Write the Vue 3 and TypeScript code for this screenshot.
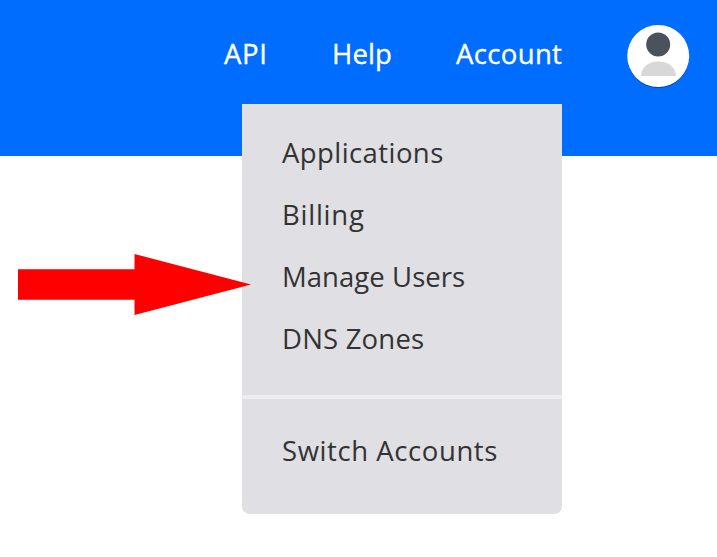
<script setup lang="ts">
interface Item {
  label: string
  key: string
}

const navigation: Item[] = [
  { label: 'API', key: 'api' },
  { label: 'Help', key: 'help' },
  { label: 'Account', key: 'account' },
]

const accountItems: Item[] = [
  { label: 'Applications', key: 'applications' },
  { label: 'Billing', key: 'billing' },
  { label: 'Manage Users', key: 'users' },
  { label: 'DNS Zones', key: 'zones' },
]
</script>

<template>
  <div class="page">
    <header class="header">
      <nav class="navigation">
        <a v-for="item in navigation" :key="item.key" :class="['nav-link', item.key]">{{ item.label }}</a>
      </nav>
      <svg class="avatar" viewBox="0 0 64 66" aria-label="User avatar">
        <circle cx="32.2" cy="33.2" r="30.8" fill="#0044a8" />
        <circle cx="32.2" cy="32" r="31" fill="#fff" />
        <circle cx="32.2" cy="20.5" r="12" fill="#4b525b" />
        <path d="M15 52C15 43.5 22.5 37.5 32.5 37.5S50 43.5 50 52Z" fill="#d8d8d8" />
      </svg>
    </header>
    <section class="menu">
      <div class="menu-group">
        <a v-for="item in accountItems" :key="item.key" :class="['menu-link', item.key]">{{ item.label }}</a>
      </div>
      <div class="menu-footer">
        <a class="menu-link switch">Switch Accounts</a>
      </div>
    </section>
    <svg class="arrow" viewBox="0 0 234 62" aria-hidden="true">
      <path d="M0 15.2H116.5V0L233 30.5L116.5 61V45.8H0Z" fill="#f00" />
    </svg>
  </div>
</template>

<style>
body {
  margin: 0;
  overflow: hidden;
}
</style>

<style scoped>
.page {
  position: relative;
  width: 717px;
  height: 557px;
  overflow: hidden;
  background: #fff;
  font-family: "Open Sans", sans-serif;
  font-size: 27.5px;
}
.header {
  box-sizing: border-box;
  display: flex;
  justify-content: flex-end;
  height: 156px;
  padding: 24px 27px 0 0;
  background: #006dff;
}
.navigation {
  display: flex;
  margin-right: 64px;
  gap: 64px;
  color: #fff;
  font-weight: 500;
  -webkit-text-stroke: 0.35px #fff;
}
.nav-link {
  height: 60px;
  line-height: 60px;
  white-space: nowrap;
}
.api { width: 44px; letter-spacing: 0.7px; }
.help { width: 60px; letter-spacing: 0.1px; }
.account { width: 106px; letter-spacing: 0.35px; }
.avatar {
  width: 64px;
  height: 66px;
}
.menu {
  position: absolute;
  top: 104px;
  left: 242px;
  width: 320px;
  height: 410px;
  border-radius: 0 0 8px 8px;
  background: #e0dfe4;
  color: #333;
}
.menu-group {
  box-sizing: border-box;
  height: 295px;
  padding: 18px 40px 0;
  border-bottom: 4px solid #eeedf1;
}
.menu-footer {
  padding: 21px 40px 0;
}
.menu-link {
  display: block;
  height: 62px;
  line-height: 62px;
  white-space: nowrap;
}
.applications { letter-spacing: 0.42px; }
.billing { letter-spacing: 0.75px; }
.users { letter-spacing: 0.05px; }
.zones { letter-spacing: 0.2px; }
.switch { letter-spacing: 0.58px; }
.arrow {
  position: absolute;
  top: 254px;
  left: 18px;
  width: 234px;
  height: 62px;
}
</style>
